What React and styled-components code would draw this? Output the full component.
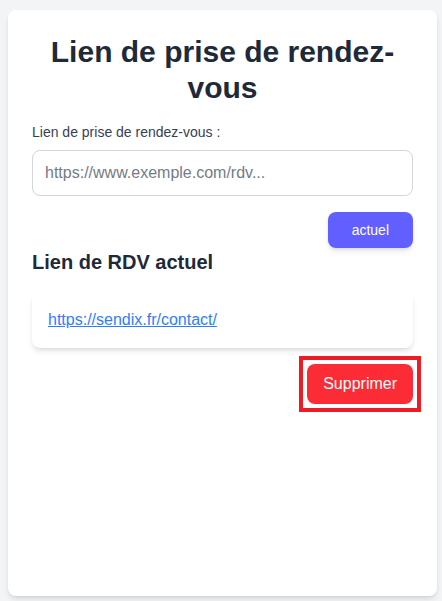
import React from "react";
import styled, { createGlobalStyle } from "styled-components";

const GlobalStyle = createGlobalStyle`
  html, body {
    margin: 0;
    padding: 0;
    background: #f3f4f6;
    font-family: "Liberation Sans", Arial, sans-serif;
  }
  * { box-sizing: border-box; }
`;

const Page = styled.div`
  min-height: 100vh;
  display: flex;
  flex-direction: column;
  padding: 10px 5px 5px 8px;
`;

const Card = styled.div`
  flex: 1;
  background: #ffffff;
  border-radius: 8px;
  box-shadow: 0 4px 6px -1px rgba(0, 0, 0, 0.1), 0 2px 4px -2px rgba(0, 0, 0, 0.1);
  padding: 24px 24px 24px;
  display: flex;
  flex-direction: column;
`;

const Title = styled.h1`
  margin: 0 0 16px;
  font-size: 30px;
  line-height: 36px;
  font-weight: 700;
  color: #1e2939;
  text-align: center;
`;

const Label = styled.label`
  display: block;
  font-size: 14px;
  line-height: 20px;
  color: #364153;
  margin-bottom: 8px;
`;

const Input = styled.input`
  display: block;
  width: 100%;
  height: 46px;
  padding: 0 12px;
  border: 1px solid #d1d5dc;
  border-radius: 8px;
  font-family: inherit;
  font-size: 16px;
  color: #1e2939;
  background: #fff;
  outline: none;
  &::placeholder {
    color: #757b86;
  }
`;

const Actions = styled.div`
  display: flex;
  justify-content: flex-end;
  margin-top: ${(p) => p.$top}px;
  margin-right: ${(p) => p.$right || 0}px;
`;

const Highlight = styled.span`
  display: inline-flex;
  border: 4px solid #ed1c24;
  padding: 4px;
  background: #fff;
`;

const Button = styled.button`
  border: none;
  border-radius: 8px;
  color: #ffffff;
  font-family: inherit;
  cursor: pointer;
  background: ${(p) => (p.$variant === "danger" ? "#fb2c36" : "#615fff")};
  font-size: ${(p) => (p.$variant === "danger" ? 16 : 14)}px;
  line-height: ${(p) => (p.$variant === "danger" ? 24 : 20)}px;
  padding: ${(p) => (p.$variant === "danger" ? "8px 16px" : "8px 24px")};
  box-shadow: ${(p) =>
    p.$variant === "danger"
      ? "none"
      : "0 4px 6px -1px rgba(0,0,0,0.1), 0 2px 4px -2px rgba(0,0,0,0.1)"};
`;

const Subtitle = styled.h2`
  margin: 0 0 16px;
  font-size: 20px;
  line-height: 28px;
  font-weight: 700;
  color: #1e2939;
`;

const LinkCard = styled.div`
  background: #fff;
  border-radius: 8px;
  padding: 16px;
  box-shadow: 0 4px 6px -1px rgba(0, 0, 0, 0.1), 0 2px 4px -2px rgba(0, 0, 0, 0.1);
`;

const Link = styled.a`
  font-size: 16px;
  line-height: 24px;
  color: #2b7fff;
  text-decoration: underline;
`;

export default function App() {
  return (
    <>
      <GlobalStyle />
      <Page>
        <Card>
          <Title>Lien de prise de rendez-vous</Title>
          <Label htmlFor="rdv">Lien de prise de rendez-vous :</Label>
          <Input id="rdv" type="text" placeholder="https://www.exemple.com/rdv..." />
          <Actions $top={16}>
            <Button>actuel</Button>
          </Actions>
          <Subtitle>Lien de RDV actuel</Subtitle>
          <LinkCard>
            <Link href="https://sendix.fr/contact/">https://sendix.fr/contact/</Link>
          </LinkCard>
          <Actions $top={8} $right={-8}>
            <Highlight>
              <Button $variant="danger">Supprimer</Button>
            </Highlight>
          </Actions>
        </Card>
      </Page>
    </>
  );
}
